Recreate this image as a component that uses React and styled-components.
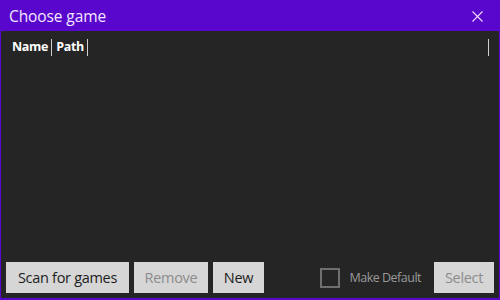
import React from "react";
import styled, { createGlobalStyle } from "styled-components";

const Global = createGlobalStyle`
  html, body { margin: 0; padding: 0; background: #5907cc; }
  * { box-sizing: border-box; }
`;

const Window = styled.div`
  width: 500px;
  height: 300px;
  display: flex;
  flex-direction: column;
  background: #5907cc;
  padding: 0 1px 2px 1px;
  font-family: "Segoe UI", "Open Sans", sans-serif;
`;

const TitleBar = styled.div`
  height: 31px;
  flex: none;
  display: flex;
  align-items: center;
  justify-content: space-between;
  padding: 1px 0 0 8px;
`;

const Title = styled.div`
  color: #f4e8ff;
  font-size: 15.5px;
  font-family: "Open Sans", sans-serif;
  letter-spacing: -0.1px;
`;

const Close = styled.div`
  width: 40px;
  height: 30px;
  display: flex;
  align-items: center;
  justify-content: center;
  margin-right: 2px;
`;

const Body = styled.div`
  flex: 1;
  background: #252525;
  display: flex;
  flex-direction: column;
`;

const Header = styled.div`
  display: flex;
  align-items: center;
  height: 26px;
  margin-top: 3px;
  padding-left: 11px;
  padding-right: 6px;
`;

const Col = styled.div`
  color: #ffffff;
  font-family: "Open Sans", sans-serif;
  font-weight: 700;
  font-size: 12.5px;
  letter-spacing: -0.3px;
  padding-right: 3px;
  height: 17px;
  line-height: 16px;
  border-right: 1px solid #d0d0d0;
  margin-right: 4px;
  flex: ${(p) => (p.$grow ? 1 : "none")};
`;

const List = styled.div`
  flex: 1;
`;

const Footer = styled.div`
  display: flex;
  align-items: center;
  padding: 0 5px 5px 5px;
  height: 37px;
`;

const Button = styled.button`
  height: 31px;
  border: none;
  background: #d6d6d6;
  color: ${(p) => (p.disabled ? "#8c8c8c" : "#1c1c1c")};
  font-family: "Open Sans", sans-serif;
  font-size: 14.5px;
  letter-spacing: -0.3px;
  padding: 0;
  margin-right: ${(p) => p.$mr || 0}px;
  width: ${(p) => p.$w}px;
  flex: none;
`;

const Spacer = styled.div`
  flex: 1;
`;

const CheckRow = styled.label`
  display: flex;
  align-items: center;
  margin-right: 13px;
`;

const Box = styled.span`
  width: 20px;
  height: 20px;
  border: 2px solid #6f6f6f;
  margin-right: 9px;
  margin-top: 1px;
`;

const CheckLabel = styled.span`
  color: #9a9a9a;
  font-family: "Open Sans", sans-serif;
  font-size: 12.5px;
  letter-spacing: -0.5px;
`;

export default function App() {
  return (
    <>
      <Global />
      <Window>
        <TitleBar>
          <Title>Choose game</Title>
          <Close>
            <svg width="11" height="11" viewBox="0 0 11 11">
              <path d="M0.5 0.5 L10.5 10.5 M10.5 0.5 L0.5 10.5" stroke="#f4d8ff" strokeWidth="1.1" />
            </svg>
          </Close>
        </TitleBar>
        <Body>
          <Header>
            <Col>Name</Col>
            <Col>Path</Col>
            <Col $grow />
          </Header>
          <List />
          <Footer>
            <Button $w={123} $mr={5}>Scan for games</Button>
            <Button $w={74} $mr={5} disabled>Remove</Button>
            <Button $w={51}>New</Button>
            <Spacer />
            <CheckRow>
              <Box />
              <CheckLabel>Make Default</CheckLabel>
            </CheckRow>
            <Button $w={60} disabled>Select</Button>
          </Footer>
        </Body>
      </Window>
    </>
  );
}
